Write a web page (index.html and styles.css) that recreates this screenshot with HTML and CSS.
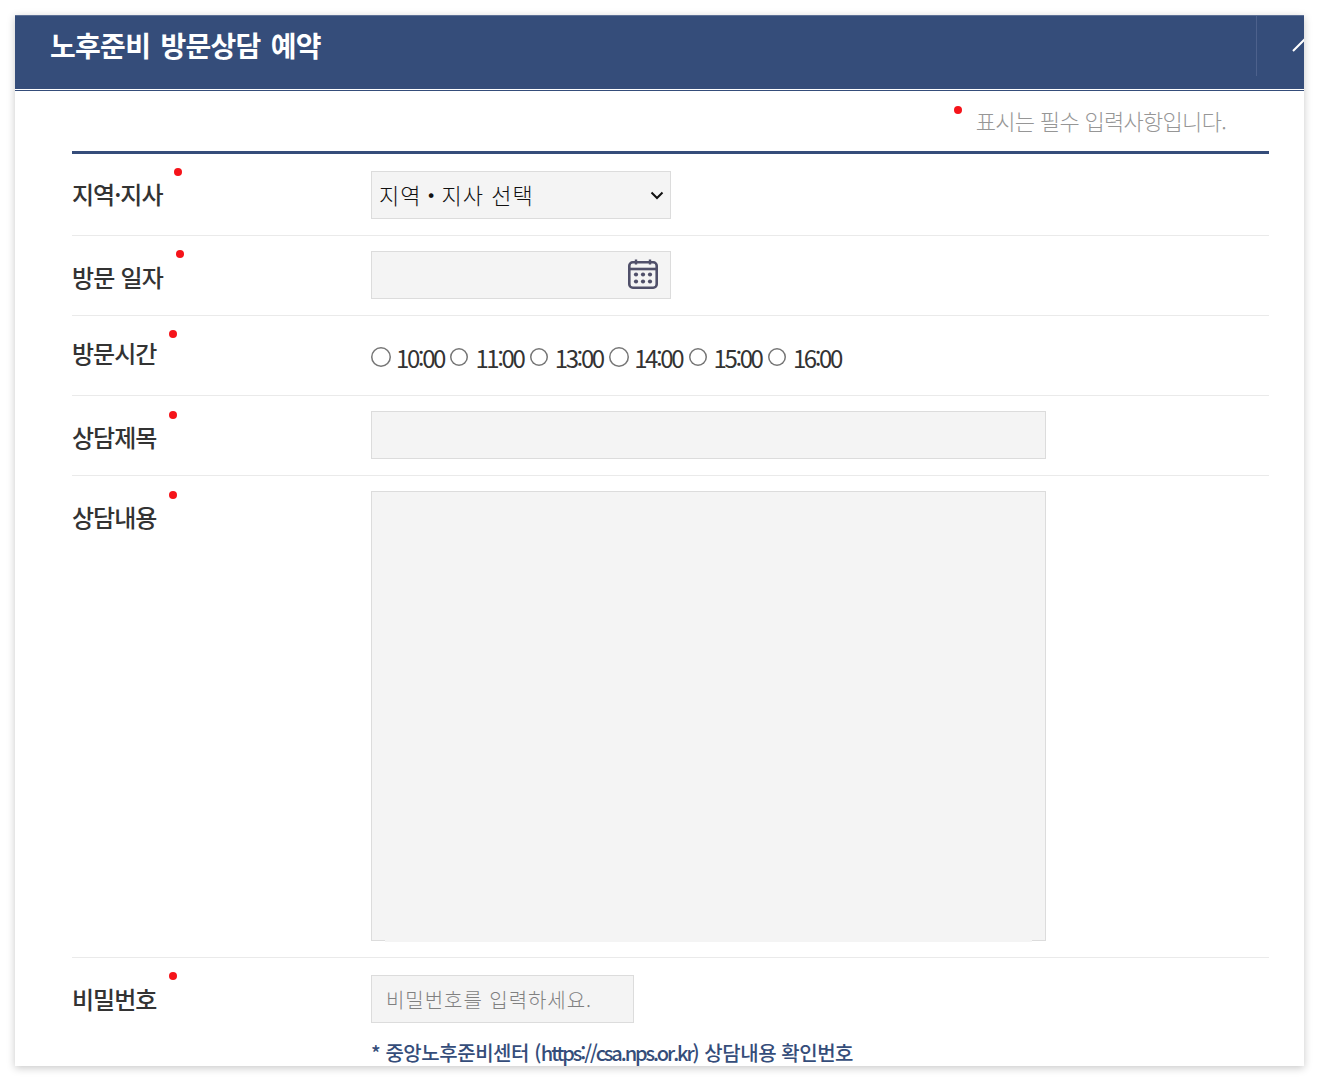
FILE: index.html
```html
<!DOCTYPE html>
<html lang="ko">
<head>
<meta charset="utf-8">
<title>노후준비 방문상담 예약</title>
<link rel="stylesheet" href="styles.css">
</head>
<body>
<section class="modal">
  <header class="modal-head">
    <h2 class="modal-title">노후준비 방문상담 예약</h2>
    <div class="toggle">
      <svg class="chevron" width="24" height="14" viewBox="0 0 24 14"><path d="M1 13 L12 2 L23 13" fill="none" stroke="#fff" stroke-width="2"/></svg>
    </div>
  </header>
  <div class="modal-body">
    <p class="notice"><span class="notice-dot"></span>표시는 필수 입력사항입니다.</p>
    <div class="form">
      <div class="row row-first">
        <div class="label"><span class="label-text label-region req req-a">지역·지사</span></div>
        <div class="field">
          <div class="select">
            <span class="select-text">지역 <b class="select-dot">·</b> 지사 선택</span>
            <svg class="select-arrow" width="14" height="9" viewBox="0 0 14 9"><path d="M1.5 1.5 L7 7 L12.5 1.5" fill="none" stroke="#111" stroke-width="2"/></svg>
          </div>
        </div>
      </div>
      <div class="row row-date">
        <div class="label"><span class="label-text label-date req req-b">방문 일자</span></div>
        <div class="field">
          <div class="box box-date">
            <svg class="cal" width="30" height="30" viewBox="0 0 30 30">
              <rect x="1.3" y="3.3" width="27.4" height="25.4" rx="3.5" fill="none" stroke="#50506a" stroke-width="2.6"/>
              <path d="M1.5 10 H28.5" stroke="#50506a" stroke-width="2.6"/>
              <path d="M8 0.5 V5.5 M22 0.5 V5.5" stroke="#50506a" stroke-width="2.4"/>
              <g fill="#50506a">
                <circle cx="8" cy="15.5" r="2.1"/><circle cx="15" cy="15.5" r="2.1"/><circle cx="22" cy="15.5" r="2.1"/>
                <circle cx="8" cy="22.5" r="2.1"/><circle cx="15" cy="22.5" r="2.1"/><circle cx="22" cy="22.5" r="2.1"/>
              </g>
            </svg>
          </div>
        </div>
      </div>
      <div class="row row-time">
        <div class="label"><span class="label-text label-time req req-d">방문시간</span></div>
        <div class="field times">
          <span class="radio big"></span><span class="time">10:00</span>
          <span class="radio"></span><span class="time">11:00</span>
          <span class="radio"></span><span class="time">13:00</span>
          <span class="radio big"></span><span class="time">14:00</span>
          <span class="radio"></span><span class="time">15:00</span>
          <span class="radio"></span><span class="time">16:00</span>
        </div>
      </div>
      <div class="row row-title">
        <div class="label"><span class="label-text label-low req req-c">상담제목</span></div>
        <div class="field"><div class="box box-wide"></div></div>
      </div>
      <div class="row row-content">
        <div class="label"><span class="label-text label-low req req-c">상담내용</span></div>
        <div class="field"><div class="box box-area"></div></div>
      </div>
      <div class="row row-pw">
        <div class="label"><span class="label-text req req-e">비밀번호</span></div>
        <div class="field">
          <div class="box box-pw">비밀번호를 입력하세요.</div>
          <p class="hint">* 중앙노후준비센터 (<span class="hint-url">https://csa.nps.or.kr</span>) 상담내용 확인번호</p>
        </div>
      </div>
    </div>
  </div>
</section>
</body>
</html>
```
FILE: styles.css
```css
* { box-sizing: border-box; }
html, body { margin: 0; padding: 0; background: #fff; }
body {
  padding: 15px;
  height: 1081px;
  overflow: hidden;
  font-family: "Noto Sans CJK KR", "Noto Sans", sans-serif;
}
.modal {
  width: 1289px;
  height: 1051px;
  background: #fff;
  box-shadow: 0 2px 8px rgba(0, 0, 0, .22);
  overflow: hidden;
}
.modal-head {
  height: 76px;
  background: #354d7a;
  border-top: 1px solid #5d7095;
  border-bottom: 1px solid #354d7a;
  box-shadow: inset 0 -1px 0 #fff;
  display: flex;
  justify-content: space-between;
  padding-left: 35px;
  position: relative;
}
.modal-title {
  margin: 0;
  color: #fff;
  font-size: 28px;
  font-weight: 700;
  line-height: 58px;
  letter-spacing: -.7px;
  word-spacing: 3px;
}
.toggle {
  width: 48px;
  height: 60px;
  border-left: 1px solid #4d618c;
  position: relative;
  overflow: visible;
}
.chevron { position: absolute; left: 35px; top: 22px; }
.modal-body { padding: 0 35px 0 57px; }
.notice {
  margin: 0;
  height: 60px;
  padding: 13px 43px 0 0;
  text-align: right;
  color: #969696;
  font-size: 22px;
  font-weight: 300;
  line-height: 32px;
  letter-spacing: -.7px;
  position: relative;
}
.notice-dot {
  position: absolute;
  left: 882px;
  top: 15px;
  width: 8px;
  height: 8px;
  border-radius: 50%;
  background: #f5141a;
}
.form { border-top: 3px solid #354d7a; }
.row {
  display: flex;
  border-bottom: 1px solid #eaeaea;
  height: 80px;
  padding-top: 15px;
  margin-right: .5px;
}
.row-first { height: 82px; padding-top: 17px; }
.row-content { height: 482px; }
.row-pw { border-bottom: 0; height: 110px; padding-top: 17px; }
.label { width: 299px; flex: none; }
.label-text {
  display: inline-block;
  position: relative;
  color: #333;
  font-size: 24px;
  font-weight: 500;
  line-height: 48px;
  letter-spacing: -1px;
}
.label-region { top: -1px; }
.label-date { top: 2px; letter-spacing: -.8px; }
.label-time { top: -2px; }
.label-low { top: 2px; }
.req::after {
  content: "";
  position: absolute;
  width: 8px;
  height: 8px;
  border-radius: 50%;
  background: #f5141a;
}
.req-a::after { left: 102px; top: -2px; }
.req-b::after { left: 104px; top: -3px; }
.req-c::after { left: 97px; top: -2px; }
.req-d::after { left: 97px; top: 1px; }
.req-e::after { left: 97px; top: -3px; }
.field { flex: 1; min-width: 0; }
.select, .box {
  background: #f4f4f4;
  border: 1px solid #dcdcdc;
  height: 48px;
}
.select {
  width: 300px;
  display: flex;
  align-items: center;
  justify-content: space-between;
  padding: 0 6px 2px 7px;
  color: #111;
  font-size: 22px;
  font-weight: 300;
  letter-spacing: 1px;
}
.select-dot { font-weight: 900; margin: 0 -1.5px; }
.select-arrow { margin-top: 2px; }
.box-date { width: 300px; display: flex; align-items: center; justify-content: flex-end; padding: 0 12px 2px 0; }
.box-wide { width: 675px; }
.box-area { width: 675px; height: 450px; position: relative; }
.box-area::after {
  content: "";
  position: absolute;
  left: 13px;
  right: 13px;
  bottom: -2px;
  height: 2px;
  background: #f4f4f4;
}
.box-pw {
  width: 263px;
  padding-left: 14px;
  color: #808080;
  font-size: 20px;
  font-weight: 300;
  line-height: 48px;
  letter-spacing: .95px;
}
.times {
  display: flex;
  align-items: center;
  height: 48px;
  padding-top: 6px;
  color: #333;
}
.radio {
  width: 18px;
  height: 18px;
  box-shadow: inset 0 0 0 1.5px #767676;
  border-radius: 50%;
  background: #fff;
  flex: none;
  margin-top: -3px;
}
.radio.big { width: 20px; height: 20px; margin-right: -2px; }
.time {
  font-size: 24px;
  font-weight: 400;
  letter-spacing: -2.4px;
  line-height: 32px;
  margin: 0 6.4px 0 7px;
  width: 48px;
  white-space: nowrap;
}
.time:first-of-type { margin-right: 6.6px; }
.hint {
  margin: 14px 0 0;
  color: #354d7a;
  font-size: 20px;
  font-weight: 500;
  line-height: 32px;
  letter-spacing: -.45px;
  white-space: nowrap;
}
.hint-url { letter-spacing: -2.1px; }
```
